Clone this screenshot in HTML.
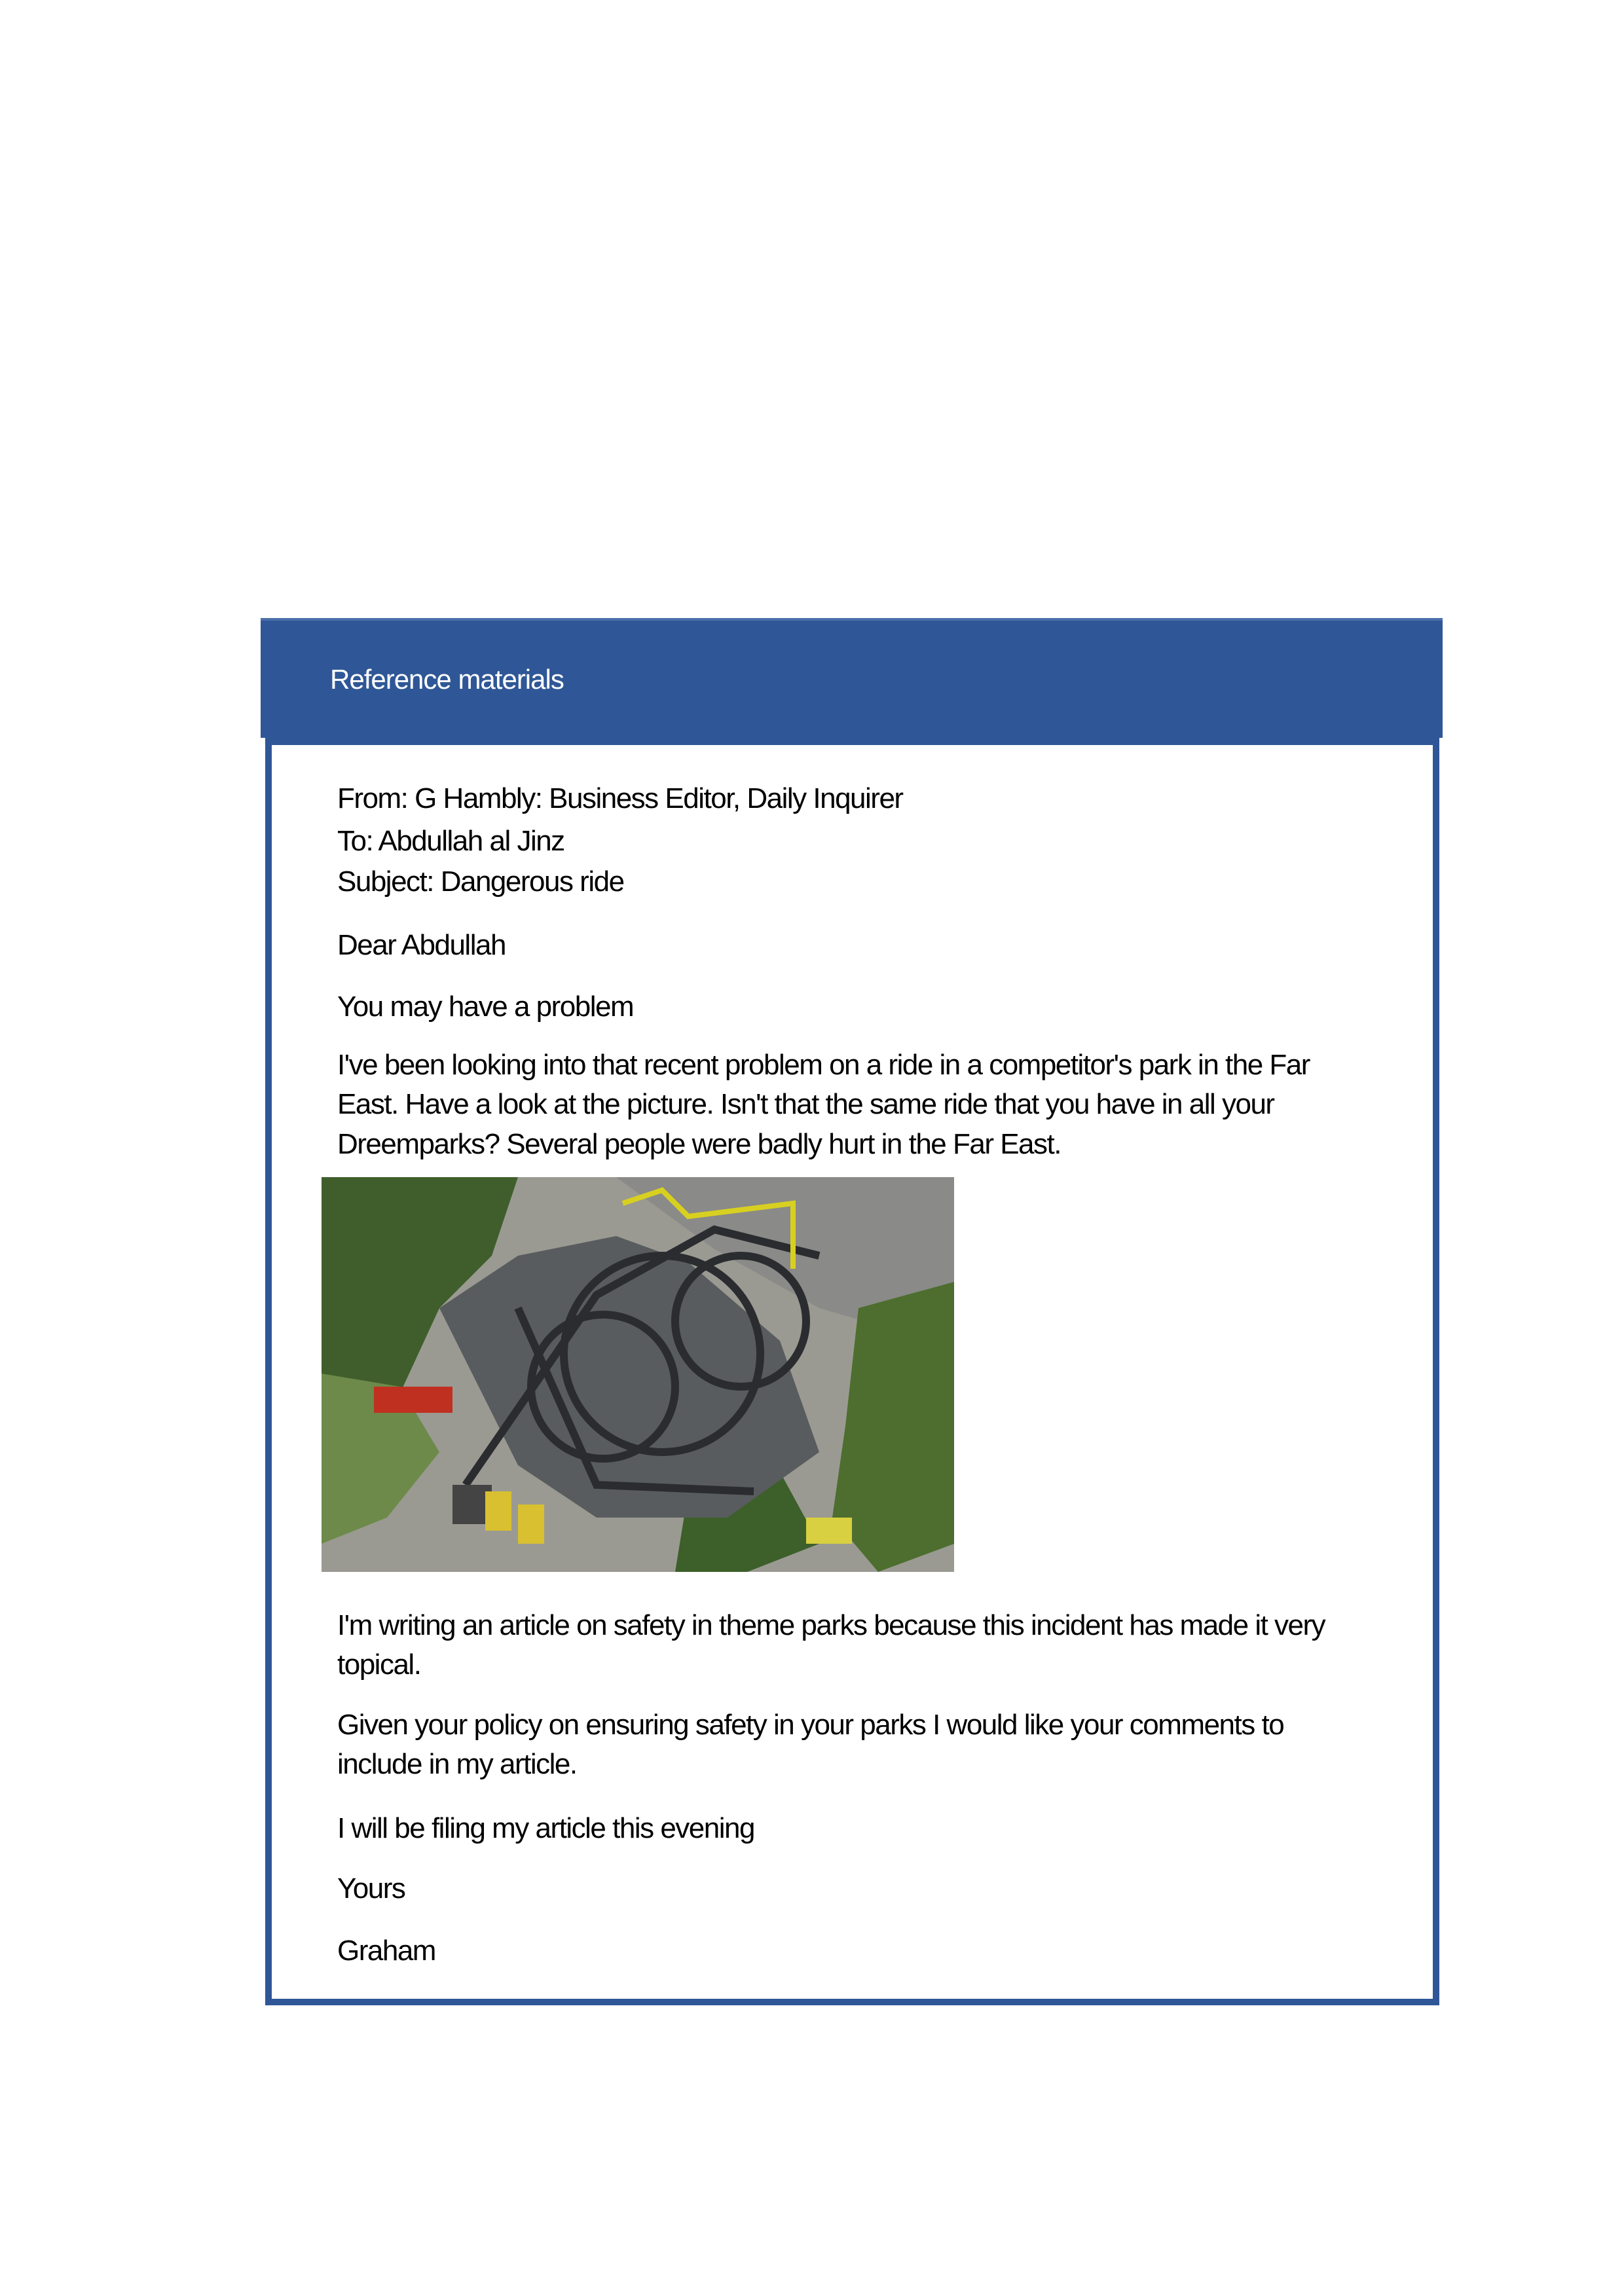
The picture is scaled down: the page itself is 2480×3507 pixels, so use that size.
<!DOCTYPE html>
<html><head><meta charset="utf-8"><style>
body{margin:0;width:2480px;height:3507px;background:#fff;position:relative;overflow:hidden;font-family:"Liberation Sans",Arial,sans-serif}
.t{position:absolute;left:515px;font-size:44px;line-height:50px;color:#000;letter-spacing:-1.5px;white-space:nowrap}
</style></head><body>
<div style="position:absolute;left:398px;top:944px;width:1805px;height:183px;background:#2f5797;border-top:4px solid #4a70aa;box-sizing:border-box"></div>
<div style="position:absolute;left:405px;top:1127px;width:1793px;height:1936px;border:10px solid #2f5797;border-top-width:11px;box-sizing:border-box;background:#fff"></div>
<div class="t" style="left:504px;top:1013px;color:#fff;font-size:42px;letter-spacing:-1px">Reference materials</div>
<div class="t" style="top:1195px">From: G Hambly: Business Editor, Daily Inquirer</div>
<div class="t" style="top:1260px">To: Abdullah al Jinz</div>
<div class="t" style="top:1322px">Subject: Dangerous ride</div>
<div class="t" style="top:1419px">Dear Abdullah</div>
<div class="t" style="top:1513px">You may have a problem</div>
<div class="t" style="top:1602px">I've been looking into that recent problem on a ride in a competitor's park in the Far</div>
<div class="t" style="top:1662px">East. Have a look at the picture. Isn't that the same ride that you have in all your</div>
<div class="t" style="top:1723px">Dreemparks? Several people were badly hurt in the Far East.</div>
<svg style="position:absolute;left:491px;top:1798px" width="966" height="603" viewBox="0 0 966 603">
<rect width="966" height="603" fill="#9a9a92"/>
<path d="M0 0H300L260 120 180 200 120 330 60 420 0 460Z" fill="#3f5e2c"/>
<path d="M0 300 120 320 180 420 100 520 0 560Z" fill="#6d8a4a"/>
<path d="M450 0H966V260L760 200 600 110Z" fill="#8a8a88"/>
<path d="M820 200 966 160V560L850 603 780 520 800 380Z" fill="#4d6e2e"/>
<path d="M560 480 700 450 760 560 650 603 540 603Z" fill="#3d5f2a"/>
<path d="M180 200 300 120 450 90 560 130 700 250 760 420 620 520 420 520 300 440Z" fill="#585c5e"/>
<g fill="none" stroke="#2a2c30" stroke-width="12">
<circle cx="520" cy="270" r="150"/><circle cx="430" cy="320" r="110"/><circle cx="640" cy="220" r="100"/>
<path d="M220 470 420 180 600 80 760 120"/><path d="M300 200 420 470 660 480"/>
</g>
<path d="M460 40 520 20 560 60 720 40 720 140" fill="none" stroke="#d8d020" stroke-width="8"/>
<rect x="200" y="470" width="60" height="60" fill="#444"/><rect x="250" y="480" width="40" height="60" fill="#d8c030"/><rect x="300" y="500" width="40" height="60" fill="#d8c030"/>
<rect x="80" y="320" width="120" height="40" fill="#c03020"/><rect x="740" y="520" width="70" height="40" fill="#d8d040"/>
</svg>
<div class="t" style="top:2458px">I'm writing an article on safety in theme parks because this incident has made it very</div>
<div class="t" style="top:2518px">topical.</div>
<div class="t" style="top:2610px">Given your policy on ensuring safety in your parks I would like your comments to</div>
<div class="t" style="top:2670px">include in my article.</div>
<div class="t" style="top:2768px">I will be filing my article this evening</div>
<div class="t" style="top:2860px">Yours</div>
<div class="t" style="top:2955px">Graham</div>
</body></html>
